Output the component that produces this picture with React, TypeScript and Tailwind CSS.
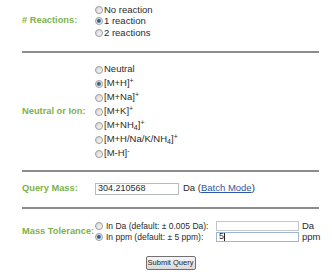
import React from "react";

function Radio({ checked = false }: { checked?: boolean }) {
  return (
    <span className="inline-flex h-[8px] w-[8px] shrink-0 items-center justify-center rounded-full border border-[#9c9c9c] bg-linear-to-br from-[#d4d4d4] to-[#fbfbfb]">
      {checked && <span className="h-[4px] w-[4px] rounded-full bg-linear-to-br from-[#173f66] to-[#4f8fc4]" />}
    </span>
  );
}

function Rule({ className = "" }: { className?: string }) {
  return <div className={"h-[2px] w-full bg-[#8d8d8d] " + className} />;
}

function Section({ label, children, className = "" }: { label: string; children: React.ReactNode; className?: string }) {
  return (
    <div className={"flex items-center " + className}>
      <div className="w-[73px] shrink-0 whitespace-nowrap text-[9.3px] font-bold text-[#7cb24c]">{label}</div>
      <div className="flex flex-col">{children}</div>
    </div>
  );
}

const reactions = [
  { label: "No reaction", checked: false },
  { label: "1 reaction", checked: true },
  { label: "2 reactions", checked: false },
];

export default function App() {
  return (
    <div className="min-h-[275px] w-[332px] bg-white font-['Liberation_Sans',Arial,sans-serif] text-[9.5px] text-[#2a2a2a]">
      <div className="ml-[22px] w-[297px] pt-[4px]">
        <Section label="# Reactions:">
          {reactions.map((r) => (
            <div key={r.label} className="flex h-[11.5px] items-center gap-[1px]">
              <Radio checked={r.checked} />
              <span>{r.label}</span>
            </div>
          ))}
        </Section>

        <Rule className="mt-[12px]" />

        <Section label="Neutral or Ion:" className="mt-[10px]">
          <div className="flex h-[14px] items-center gap-[1px]">
            <Radio />
            <span>Neutral</span>
          </div>
          <div className="flex h-[14px] items-center gap-[1px]">
            <Radio checked />
            <span>
              [M+H]<sup className="text-[7px]">+</sup>
            </span>
          </div>
          <div className="flex h-[14px] items-center gap-[1px]">
            <Radio />
            <span>
              [M+Na]<sup className="text-[7px]">+</sup>
            </span>
          </div>
          <div className="flex h-[14px] items-center gap-[1px]">
            <Radio />
            <span>
              [M+K]<sup className="text-[7px]">+</sup>
            </span>
          </div>
          <div className="flex h-[14px] items-center gap-[1px]">
            <Radio />
            <span>
              [M+NH<sub className="text-[7px]">4</sub>]<sup className="text-[7px]">+</sup>
            </span>
          </div>
          <div className="flex h-[14px] items-center gap-[1px]">
            <Radio />
            <span>
              [M+H/Na/K/NH<sub className="text-[7px]">4</sub>]<sup className="text-[7px]">+</sup>
            </span>
          </div>
          <div className="flex h-[14px] items-center gap-[1px]">
            <Radio />
            <span>
              [M-H]<sup className="text-[7px]">-</sup>
            </span>
          </div>
        </Section>

        <Rule className="mt-[9px]" />

        <Section label="Query Mass:" className="mt-[10px] h-[14px]">
          <div className="flex items-center">
            <div className="flex h-[12px] w-[84px] items-center border border-[#b7bcc4] pl-[2px] text-[9px]">304.210568</div>
            <span className="ml-[4px]">
              Da (<span className="text-[#2f56a6] underline">Batch Mode</span>)
            </span>
          </div>
        </Section>

        <Rule className="mt-[11px]" />

        <Section label="Mass Tolerance:" className="mt-[12px]">
          <div className="flex h-[11px] items-center">
            <div className="flex w-[121px] shrink-0 items-center gap-[3px] whitespace-nowrap text-[8.5px]">
              <Radio />
              <span>In Da (default: ± 0.005 Da):</span>
            </div>
            <div className="h-[10px] w-[83px] shrink-0 border border-[#c2c7ce]" />
            <span className="ml-[3px]">Da</span>
          </div>
          <div className="flex h-[11px] items-center">
            <div className="flex w-[121px] shrink-0 items-center gap-[3px] whitespace-nowrap text-[8.5px]">
              <Radio checked />
              <span>In ppm (default: ± 5 ppm):</span>
            </div>
            <div className="flex h-[10px] w-[83px] shrink-0 items-center border border-[#9fb6cf] pl-[2px] text-[9px]">
              5<span className="h-[8px] w-px bg-[#222]" />
            </div>
            <span className="ml-[3px]">ppm</span>
          </div>
        </Section>

        <div className="mt-[13px] flex justify-center">
          <button className="h-[14px] w-[50px] rounded-[2px] border border-[#707070] bg-linear-to-b from-[#f6f6f6] to-[#d9d9d9] text-[7.5px] leading-none whitespace-nowrap text-[#222]">
            Submit Query
          </button>
        </div>
      </div>
    </div>
  );
}
